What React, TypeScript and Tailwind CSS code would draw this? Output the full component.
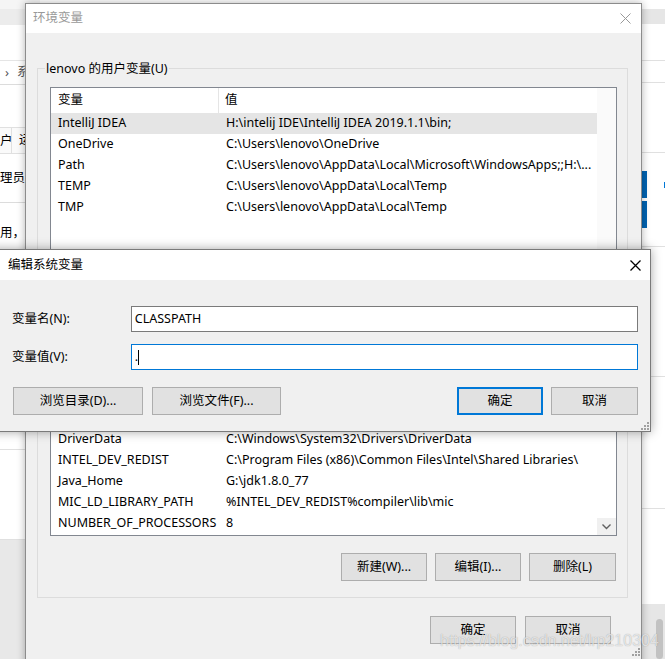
import React from "react";

const userVars: [string, string][] = [
  ["IntelliJ IDEA", "H:\\intelij IDE\\IntelliJ IDEA 2019.1.1\\bin;"],
  ["OneDrive", "C:\\Users\\lenovo\\OneDrive"],
  ["Path", "C:\\Users\\lenovo\\AppData\\Local\\Microsoft\\WindowsApps;;H:\\..."],
  ["TEMP", "C:\\Users\\lenovo\\AppData\\Local\\Temp"],
  ["TMP", "C:\\Users\\lenovo\\AppData\\Local\\Temp"],
];

const sysVars: [string, string][] = [
  ["ComSpec", "C:\\Windows\\system32\\cmd.exe"],
  ["DriverData", "C:\\Windows\\System32\\Drivers\\DriverData"],
  ["INTEL_DEV_REDIST", "C:\\Program Files (x86)\\Common Files\\Intel\\Shared Libraries\\"],
  ["Java_Home", "G:\\jdk1.8.0_77"],
  ["MIC_LD_LIBRARY_PATH", "%INTEL_DEV_REDIST%compiler\\lib\\mic"],
  ["NUMBER_OF_PROCESSORS", "8"],
];

function CloseIcon({ color, width }: { color: string; width: number }) {
  return (
    <svg width="11" height="11" viewBox="0 0 11 11">
      <path d="M0.5 0.5 L10.5 10.5 M10.5 0.5 L0.5 10.5" stroke={color} strokeWidth={width} />
    </svg>
  );
}

function Grip() {
  return (
    <svg width="9" height="9" viewBox="0 0 9 9" fill="#a0a0a0">
      <rect x="7" y="1" width="2" height="2" />
      <rect x="4" y="4" width="2" height="2" />
      <rect x="7" y="4" width="2" height="2" />
      <rect x="1" y="7" width="2" height="2" />
      <rect x="4" y="7" width="2" height="2" />
      <rect x="7" y="7" width="2" height="2" />
    </svg>
  );
}

function Row({ name, value, selected }: { name: string; value: string; selected?: boolean }) {
  return (
    <div className={`flex h-[21px] shrink-0 items-center whitespace-nowrap ${selected ? "bg-[#e5e5e5]" : ""}`}>
      <div className="w-[168px] shrink-0 overflow-hidden pl-[7px]">{name}</div>
      <div className="min-w-0 flex-1 overflow-hidden pl-[7px]">{value}</div>
    </div>
  );
}

function WinButton({ label, w, primary }: { label: string; w: string; primary?: boolean }) {
  return (
    <div
      className={`flex h-[28px] items-center justify-center bg-[#e1e1e1] ${w} ${
        primary ? "border-2 border-[#0078d7]" : "border border-[#adadad]"
      }`}
    >
      {label}
    </div>
  );
}

function GroupLabel({ text }: { text: string }) {
  return <div className="-mt-[9px] ml-[7px] h-[18px] w-fit bg-[#f0f0f0] px-[1px] leading-[18px]">{text}</div>;
}

export default function App() {
  return (
    <div className="relative h-[659px] w-[665px] overflow-hidden bg-white font-['Noto_Sans','Noto_Sans_CJK_SC',sans-serif] text-[12.5px] text-black">
      {/* window behind, left side */}
      <div className="absolute left-0 top-0 flex h-[659px] w-[40px] flex-col">
        <div className="h-[9px] bg-[#f5f5f5]" />
        <div className="h-[16px] bg-[#ececec]" />
        <div className="h-[36px] border-b border-[#e5e5e5]" />
        <div className="flex h-[24px] items-center gap-[8px] border-b border-[#dcdcdc] pl-[5px] text-[#555]">
          <span className="text-[13px]">›</span>
          <span>系</span>
        </div>
        <div className="h-[42px]" />
        <div className="flex h-[27px] items-center border-y border-[#e0e0e0] bg-[#fafafa]">
          <span className="w-[12px] border-r border-[#e0e0e0] text-right leading-[26px]">户</span>
          <span className="pl-[7px]">运</span>
        </div>
        <div className="flex h-[48px] items-center">理员登</div>
        <div className="flex h-[45px] items-end border-t border-[#dcdcdc] pb-[4px]">用，以</div>
        <div className="h-[203px] border-b border-[#e0e0e0]" />
        <div className="h-[90px] border-b border-[#e0e0e0]" />
        <div className="flex-1 bg-[#e8e8e8]" />
      </div>

      {/* window behind, right side */}
      <div className="absolute right-0 top-0 flex h-[659px] w-[24px] flex-col">
        <div className="h-[9px]" />
        <div className="h-[16px] bg-[#e6e6e6]" />
        <div className="h-[37px] border-b border-[#e0e0e0]" />
        <div className="h-[23px] border-b border-[#e0e0e0]" />
        <div className="h-[72px] border-b border-[#e0e0e0]" />
        <div className="flex h-[96px] flex-col justify-center gap-[3px] border-b border-[#e0e0e0]">
          <div className="flex items-center justify-between">
            <div className="h-[27px] w-[6px] bg-[#0063b1]" />
            <div className="h-[6px] w-[1px] bg-[#0078d7]" />
          </div>
          <div className="h-[27px] w-[6px] bg-[#0063b1]" />
        </div>
        <div className="h-[133px] border-b border-[#e0e0e0]" />
        <div className="h-[136px] border-b border-[#e0e0e0]" />
        <div className="h-[97px]" />
        <div className="flex flex-1 justify-end bg-[#e6e6e6] pr-[2px] pt-[15px]">
          <div className="h-[40px] w-[7px] rounded-[4px] bg-[#c2c2c2]" />
        </div>
      </div>

      {/* 环境变量 window */}
      <div className="absolute left-[25px] top-[3px] flex h-[700px] w-[617px] flex-col border border-[#8c8c8c] bg-[#f0f0f0] shadow-[0_0_8px_rgba(0,0,0,0.3)]">
        <div className="flex h-[29px] shrink-0 items-center justify-between bg-white pl-[7px] pr-[10px] text-[#999]">
          <span>环境变量</span>
          <CloseIcon color="#999" width={1} />
        </div>

        <div className="flex flex-col pl-[11px] pr-[13px]">
          {/* user variables */}
          <div className="mt-[35px] h-[265px] border border-[#dcdcdc]">
            <GroupLabel text="lenovo 的用户变量(U)" />
            <div className="ml-[12px] mt-[9px] flex h-[200px] w-[567px] border border-[#828790] bg-white">
              <div className="flex min-w-0 flex-1 flex-col">
                <div className="flex h-[25px] shrink-0 items-center">
                  <div className="flex h-full w-[168px] items-center border-r border-[#e5e5e5] pl-[7px]">变量</div>
                  <div className="pl-[6px]">值</div>
                </div>
                {userVars.map(([n, v], i) => (
                  <Row key={n} name={n} value={v} selected={i === 0} />
                ))}
              </div>
              <div className="w-[19px] bg-[#fafafa]" />
            </div>
          </div>

          {/* system variables */}
          <div className="mt-[18px] flex flex-col border border-[#dcdcdc] pb-[16px]">
            <GroupLabel text="系统变量(S)" />
            <div className="ml-[12px] mt-[25px] flex h-[150px] w-[567px] border border-[#828790] bg-white">
              <div className="flex min-w-0 flex-1 flex-col justify-end overflow-hidden pb-[1px]">
                {sysVars.map(([n, v]) => (
                  <Row key={n} name={n} value={v} />
                ))}
              </div>
              <div className="flex w-[19px] flex-col justify-end bg-white">
                <div className="flex h-[17px] items-center justify-center bg-[#f0f0f0]">
                  <svg width="9" height="6" viewBox="0 0 9 6">
                    <path d="M0.5 0.5 L4.5 4.5 L8.5 0.5" fill="none" stroke="#606060" strokeWidth="1.4" />
                  </svg>
                </div>
              </div>
            </div>
            <div className="mr-[11px] mt-[17px] flex justify-end gap-[8px]">
              <WinButton label="新建(W)..." w="w-[86px]" />
              <WinButton label="编辑(I)..." w="w-[86px]" />
              <WinButton label="删除(L)" w="w-[87px]" />
            </div>
          </div>
        </div>

        <div className="mr-[30px] mt-[18px] flex justify-end gap-[9px]">
          <WinButton label="确定" w="w-[86px]" />
          <WinButton label="取消" w="w-[86px]" />
        </div>
        <div className="mr-[1px] mt-[3px] flex justify-end">
          <Grip />
        </div>
      </div>

      {/* 编辑系统变量 dialog */}
      <div className="absolute left-[-10px] top-[249px] flex h-[183px] w-[661px] flex-col border border-[#7a7a7a] bg-[#f0f0f0] shadow-[0_0_10px_rgba(0,0,0,0.35)]">
        <div className="flex h-[30px] shrink-0 items-center justify-between bg-white pl-[17px] pr-[9px]">
          <span>编辑系统变量</span>
          <CloseIcon color="#000" width={1.3} />
        </div>
        <div className="flex flex-col pl-[21px] pr-[12px] pt-[26px]">
          <div className="flex items-center">
            <span className="w-[119px]">变量名(N):</span>
            <div className="flex h-[26px] w-[508px] items-center border border-[#7a7a7a] bg-white pl-[3px]">CLASSPATH</div>
          </div>
          <div className="mt-[12px] flex items-center">
            <span className="w-[119px]">变量值(V):</span>
            <div className="flex h-[26px] w-[508px] items-center border border-[#0078d7] bg-white pl-[3px]">
              <span>.</span>
              <span className="h-[15px] w-[1px] bg-black" />
            </div>
          </div>
          <div className="mt-[17px] flex items-center pl-[1px]">
            <WinButton label="浏览目录(D)..." w="w-[130px]" />
            <div className="ml-[9px]">
              <WinButton label="浏览文件(F)..." w="w-[129px]" />
            </div>
            <div className="ml-auto flex gap-[8px]">
              <WinButton label="确定" w="w-[86px]" primary />
              <WinButton label="取消" w="w-[87px]" />
            </div>
          </div>
        </div>
        <div className="mt-auto flex justify-end pb-[1px] pr-[1px]">
          <Grip />
        </div>
      </div>

      {/* watermark */}
      <div className="pointer-events-none absolute left-[440px] top-[630px] font-['Liberation_Sans',sans-serif] text-[16px] leading-[22px] text-white/70 [text-shadow:0_0_1px_rgba(0,0,0,0.35)]">
        https://blog.csdn.net/lrp210304
      </div>
    </div>
  );
}
